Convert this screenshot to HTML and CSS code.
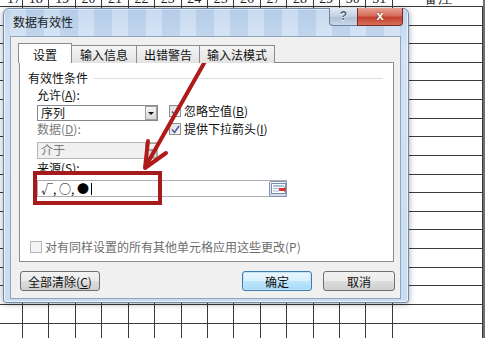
FILE: index.html
```html
<!DOCTYPE html>
<html>

<head>
  <title>数据有效性</title>
  <link rel="stylesheet" href="styles.css">
</head>

<body>
  <!-- spreadsheet behind the dialog -->
  <div class="sheet">
    <div class="sheet-head">
      <div class="cell">17</div>
      <div class="cell">18</div>
      <div class="cell">19</div>
      <div class="cell">20</div>
      <div class="cell">21</div>
      <div class="cell">22</div>
      <div class="cell">23</div>
      <div class="cell">24</div>
      <div class="cell">25</div>
      <div class="cell">26</div>
      <div class="cell">27</div>
      <div class="cell">28</div>
      <div class="cell">29</div>
      <div class="cell">30</div>
      <div class="cell">31</div>
      <div class="cell wide">备注</div>
      <div class="edge"></div>
      <div class="rest"></div>
    </div>
    <div class="sheet-body">
      <div class="col"></div><div class="col"></div><div class="col"></div><div class="col"></div>
      <div class="col"></div><div class="col"></div><div class="col"></div><div class="col"></div>
      <div class="col"></div><div class="col"></div><div class="col"></div><div class="col"></div>
      <div class="col"></div><div class="col"></div><div class="col"></div>
      <div class="col wide"></div>
      <div class="edge"></div>
      <div class="rest"></div>
    </div>
  </div>

  <div class="dialog">
    <div class="titlebar">
      <span class="title">数据有效性</span>
      <div class="caption-buttons">
        <div class="cap-help">?</div>
        <div class="cap-close">x</div>
      </div>
    </div>

    <div class="client">
      <div class="tabs">
        <div class="tab active">设置</div>
        <div class="tab w66">输入信息</div>
        <div class="tab w64">出错警告</div>
        <div class="tab w76">输入法模式</div>
      </div>

      <div class="panel">
        <div class="legend">
          <span>有效性条件</span>
          <div class="legend-line"></div>
        </div>

        <div class="group">
          <div class="label first">允许(<u>A</u>):</div>
          <div class="row">
            <div class="left-col">
              <div class="select">
                <span class="select-text">序列</span>
                <span class="drop"><span class="tri"></span></span>
              </div>
              <div class="label muted">数据(<u>D</u>):</div>
              <div class="select disabled">
                <span class="select-text">介于</span>
                <span class="drop"><span class="tri"></span></span>
              </div>
            </div>
            <div class="right-col">
              <div class="check-row">
                <span class="check">
                  <svg width="9" height="9" viewBox="0 0 9 9"><path d="M1 4.5 L3.5 7.5 L8 1" fill="none" stroke="#4b5f9c" stroke-width="1.6"/></svg>
                </span>
                忽略空值(<u>B</u>)
              </div>
              <div class="check-row">
                <span class="check">
                  <svg width="9" height="9" viewBox="0 0 9 9"><path d="M1 4.5 L3.5 7.5 L8 1" fill="none" stroke="#4b5f9c" stroke-width="1.6"/></svg>
                </span>
                提供下拉箭头(<u>I</u>)
              </div>
            </div>
          </div>
          <div class="label source-label">来源(<u>S</u>):</div>
          <div class="source">
            <span class="source-text">√, ○, ●<span class="caret"></span></span>
            <span class="ref-btn">
              <svg width="15" height="11" viewBox="0 0 15 11">
                <rect x="0.5" y="0.5" width="14" height="10" fill="#fff" stroke="#6f8fb8"/>
                <line x1="2" y1="3" x2="13" y2="3" stroke="#4f7fc0"/>
                <line x1="2" y1="5.5" x2="8" y2="5.5" stroke="#9db6d8"/>
                <line x1="2" y1="8" x2="8" y2="8" stroke="#9db6d8"/>
                <path d="M8 5 L13 5 L13 3.5 L15 6.5 L13 9.5 L13 8 L8 8 Z" fill="#d8342a"/>
              </svg>
            </span>
          </div>
        </div>

        <div class="apply-row">
          <span class="check off"></span>
          对有同样设置的所有其他单元格应用这些更改(P)
        </div>
      </div>

      <div class="footer">
        <button class="btn clear">全部清除(<u>C</u>)</button>
        <div class="footer-right">
          <button class="btn default">确定</button>
          <button class="btn cancel">取消</button>
        </div>
      </div>
    </div>
  </div>

  <!-- annotation drawn over the screenshot -->
  <div class="mark-box"></div>
  <svg class="mark-arrow" width="487" height="338" viewBox="0 0 487 338">
    <line x1="207" y1="58" x2="147" y2="164" stroke="#b01a1a" stroke-width="4" stroke-linecap="round"/>
    <polyline points="148,141 145,168 166,153" fill="none" stroke="#b01a1a" stroke-width="4" stroke-linejoin="round" stroke-linecap="round"/>
  </svg>
</body>

</html>
```

FILE: styles.css
```css
body {
  margin: 0;
  width: 487px;
  height: 338px;
  overflow: hidden;
  position: relative;
  background: #fff;
  font-family: "Noto Sans CJK SC", "Noto Sans", sans-serif;
  font-size: 12px;
  color: #111;
}

u {
  text-decoration: underline;
}

/* ---------- sheet ---------- */

.sheet-head,
.sheet-body {
  display: grid;
  grid-template-columns: 23px repeat(14, 26.43px) 90px 2px 1fr;
}

.sheet-head {
  margin-top: -12px;
  height: 19px;
}

.sheet-head .cell {
  box-sizing: border-box;
  border-right: 1px solid #3a3a3a;
  border-bottom: 1px solid #3a3a3a;
  padding-top: 5px;
  line-height: 12px;
  text-align: center;
  font-family: "Liberation Serif", serif;
  font-size: 14px;
  color: #222;
  overflow: hidden;
}

.sheet-head .cell:first-child {
  text-align: right;
  padding-right: 1px;
}

.sheet-head .wide,
.sheet-body .wide {
  border-right: none;
}

.edge {
  background: #707070;
}

.sheet-body {
  height: 331px;
  background: repeating-linear-gradient(to bottom, transparent 0 17.6px, #3a3a3a 17.6px 18.62px);
}

.sheet-body .col {
  box-sizing: border-box;
  border-right: 1px solid #3a3a3a;
}

.rest {
  background: #fff;
}

/* ---------- dialog frame ---------- */

.dialog {
  position: absolute;
  left: 3px;
  top: 8px;
  width: 406px;
  height: 295px;
  box-sizing: border-box;
  padding: 0 7px 3px 6px;
  display: flex;
  flex-direction: column;
  border: 1px solid #6d8bb0;
  border-radius: 6px 6px 3px 3px;
  background: linear-gradient(180deg, #bcd2ec 0, #d3e3f5 40px, #cadcf1 100%);
  box-shadow: inset 0 0 0 1px rgba(255, 255, 255, 0.6), 0 1px 6px rgba(0, 0, 0, 0.35);
}

.titlebar {
  height: 27px;
  display: flex;
  align-items: flex-start;
  background: repeating-linear-gradient(90deg, rgba(255, 255, 255, 0.18) 0 16px, rgba(140, 170, 210, 0.16) 16px 34px);
}

.title {
  padding-left: 3px;
  line-height: 26px;
  color: #1b1b1b;
}

.caption-buttons {
  margin-left: auto;
  margin-right: -2px;
  margin-top: -1px;
  display: flex;
  height: 18px;
}

.cap-help {
  width: 28px;
  box-sizing: border-box;
  border: 1px solid #6a7f9c;
  border-top: none;
  border-right: none;
  border-radius: 0 0 0 4px;
  background: linear-gradient(#e4ebf4, #c2d0e1 50%, #aebfd4 51%, #c9d7e7);
  text-align: center;
  font-family: "Liberation Sans", sans-serif;
  font-size: 12px;
  font-weight: bold;
  line-height: 17px;
  color: #56657c;
  text-shadow: 0 1px 0 #fff;
}

.cap-close {
  width: 46px;
  box-sizing: border-box;
  border: 1px solid #7c2a20;
  border-top: none;
  border-radius: 0 0 4px 0;
  background: linear-gradient(#e9a395, #d56e5b 45%, #c2412c 55%, #d6705a);
  text-align: center;
  font-family: "Liberation Sans", sans-serif;
  font-size: 13px;
  font-weight: bold;
  line-height: 16px;
  color: #fff;
  text-shadow: 0 0 2px #5a1a10;
}

/* ---------- client area ---------- */

.client {
  flex: 1;
  display: flex;
  flex-direction: column;
  padding: 6px 5px 0 7px;
  background: #f0f0f0;
  border: 1px solid #8ea4bf;
}

.tabs {
  display: flex;
  align-items: flex-end;
  height: 20px;
  margin-bottom: -1px;
  position: relative;
  z-index: 1;
}

.tab {
  box-sizing: border-box;
  height: 18px;
  margin-left: -1px;
  border: 1px solid #898c95;
  border-bottom: none;
  background: linear-gradient(#f5f5f5, #e2e2e2);
  text-align: center;
  line-height: 17px;
}

.tab.active {
  width: 54px;
  height: 20px;
  margin-left: 0;
  background: #fff;
  line-height: 21px;
  position: relative;
  z-index: 1;
}

.w66 {
  width: 66px;
}

.w64 {
  width: 64px;
}

.w76 {
  width: 76px;
}

.panel {
  width: 375px;
  height: 200px;
  margin-left: 1px;
  box-sizing: border-box;
  padding: 7px 8px 7px 8px;
  display: flex;
  flex-direction: column;
  background: #fff;
  border: 1px solid #898c95;
}

.legend {
  display: flex;
  align-items: center;
  line-height: 16px;
}

.legend-line {
  flex: 1;
  height: 1px;
  margin-left: 6px;
  margin-right: 2px;
  background: #d5dfe5;
}

.group {
  padding-left: 9px;
}

.label {
  line-height: 14px;
}

.label.first {
  margin-top: 2px;
}

.muted {
  color: #7a7a7a;
}

.left-col .label {
  margin-top: 1px;
  line-height: 13px;
}

.row {
  display: flex;
}

.left-col {
  width: 121px;
}

.select {
  display: flex;
  height: 16px;
  margin-top: 3px;
  box-sizing: border-box;
  border: 1px solid #828790;
  background: #fff;
}

.select.disabled {
  height: 17px;
  margin-top: 7px;
  border-color: #b4b8bc;
  background: #f0f0f0;
  color: #7a7a7a;
}

.select-text {
  flex: 1;
  padding-left: 3px;
  line-height: 14px;
}

.drop {
  width: 12px;
  box-sizing: border-box;
  border: 1px solid #a0a0a0;
  margin: 0;
  background: linear-gradient(#f6f6f6, #dadada);
  display: flex;
  align-items: center;
  justify-content: center;
}

.tri {
  width: 0;
  height: 0;
  border-left: 3px solid transparent;
  border-right: 3px solid transparent;
  border-top: 3px solid #111;
}

.disabled .tri {
  border-top-color: #a0a0a0;
}

.right-col {
  margin-left: 11px;
}

.check-row {
  display: flex;
  align-items: center;
  line-height: 18px;
  height: 18px;
}

.check {
  width: 12px;
  height: 12px;
  box-sizing: border-box;
  margin-right: 3px;
  border: 1px solid #8e8f8f;
  background: linear-gradient(135deg, #dcdcdc, #fbfbfb);
  display: flex;
  align-items: center;
  justify-content: center;
}

.check.off {
  border-color: #b5b5b5;
  background: #f4f4f4;
}

.source-label {
  margin-top: 2px;
}

.source {
  width: 250px;
  height: 17px;
  margin-top: 5px;
  box-sizing: border-box;
  border: 1px solid #abadb3;
  display: flex;
  align-items: center;
}

.source-text {
  padding-left: 3px;
  display: flex;
  align-items: center;
  line-height: 14px;
  font-size: 12px;
  color: #000;
}

.caret {
  display: inline-block;
  width: 1px;
  height: 12px;
  margin-left: 2px;
  background: #000;
}

.ref-btn {
  margin-left: auto;
  margin-right: -1px;
  width: 18px;
  height: 16px;
  box-sizing: border-box;
  border: 1px solid #8594a8;
  border-radius: 2px;
  background: linear-gradient(#f3f5f8, #d3dae3);
  display: flex;
  align-items: center;
  justify-content: center;
}

.apply-row {
  margin-top: auto;
  margin-left: 2px;
  display: flex;
  align-items: center;
  line-height: 14px;
  color: #6d6d6d;
}

/* ---------- buttons ---------- */

.footer {
  margin-top: 9px;
  display: flex;
  justify-content: space-between;
}

.footer-right {
  display: flex;
  gap: 11px;
}

.btn {
  height: 20px;
  padding: 0;
  box-sizing: border-box;
  border: 1px solid #707070;
  border-radius: 3px;
  background: linear-gradient(#f2f2f2, #ebebeb 50%, #dddddd 51%, #cfcfcf);
  font-family: "Noto Sans CJK SC", sans-serif;
  font-size: 12px;
  line-height: 17px;
  color: #111;
}

.clear {
  width: 80px;
  margin-left: 2px;
}

.default {
  width: 70px;
  border-color: #3c7fb1;
  box-shadow: inset 0 0 0 1px #bfe3f7;
  background: linear-gradient(#eaf6fd, #d9f0fc 50%, #bee6fd 51%, #a7d9f5);
}

.cancel {
  width: 72px;
}

/* ---------- annotation ---------- */

.mark-box {
  position: absolute;
  left: 33px;
  top: 171px;
  width: 129px;
  height: 34px;
  box-sizing: border-box;
  border: 4px solid #a51b1b;
}

.mark-arrow {
  position: absolute;
  left: 0;
  top: 0;
  pointer-events: none;
}
```
